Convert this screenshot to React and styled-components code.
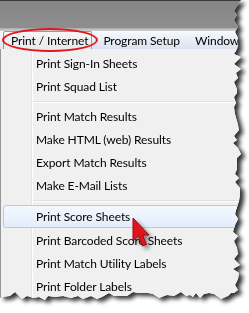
import React from 'react';
import styled, { createGlobalStyle } from 'styled-components';

const GlobalStyle = createGlobalStyle`
  html, body {
    margin: 0;
    padding: 0;
    background: #ffffff;
  }
  body {
    font-family: Lato, "Noto Sans", sans-serif;
  }
`;

// torn-paper outline, seeded so it draws the same every time
const makeTear = () => {
   let seed = 7;
   const rnd = () => {
      seed = (seed * 9301 + 49297) % 233280;
      return seed / 233280;
   };
   const pts = ['0px 0px', '241px 0px'];
   for (let y = 6; y < 288; y += 3 + Math.round(rnd() * 4)) {
      pts.push(`${233 + Math.round(rnd() * 8)}px ${y}px`);
   }
   pts.push('238px 290px');
   for (let x = 234; x > 0; x -= 3 + Math.round(rnd() * 5)) {
      pts.push(`${x}px ${292 + Math.round(rnd() * 8)}px`);
   }
   pts.push('0px 298px');
   return `polygon(${pts.join(', ')})`;
};

const TEAR = makeTear();

const MENU = [
   { label: 'Print Sign-In Sheets' },
   { label: 'Print Squad List' },
   { sep: true },
   { label: 'Print Match Results' },
   { label: 'Make HTML (web) Results' },
   { label: 'Export Match Results' },
   { label: 'Make E-Mail Lists' },
   { sep: true },
   { label: 'Print Score Sheets', active: true },
   { label: 'Print Barcoded Score Sheets' },
   { label: 'Print Match Utility Labels' },
   { label: 'Print Folder Labels' },
];

const App = () => {
   return (
      <Stage>
         <GlobalStyle />
         <Shadow>
            <Paper $clip={TEAR}>
               <TitleStrip />
               <TitleEdge />
               <MenuBar>
                  <BarItem $open>Print / Internet</BarItem>
                  <BarItem>Program Setup</BarItem>
                  <BarItem>Window</BarItem>
               </MenuBar>
               <Dropdown>
                  {MENU.map((item, i) =>
                     item.sep ? (
                        <Separator key={i} />
                     ) : (
                        <MenuItem key={i} $active={item.active}>
                           {item.label}
                        </MenuItem>
                     )
                  )}
               </Dropdown>
            </Paper>
         </Shadow>
         <Ring />
         <Pointer viewBox="0 0 18 31" width="18" height="31">
            <path
               d="M1 1 L1 24 L6.5 19 L10.5 29 L14.5 27.5 L10.5 18 L17 18 Z"
               fill="#e3141b"
               stroke="#9c0a0e"
               strokeWidth="1"
               strokeLinejoin="round"
            />
         </Pointer>
      </Stage>
   );
};

export default App;

const Stage = styled.div`
   position: relative;
   width: 249px;
   height: 313px;
   overflow: hidden;
   background: #ffffff;
`;

const Shadow = styled.div`
   width: 243px;
   filter: drop-shadow(4px 3px 2px rgba(0, 0, 0, 0.8));
`;

const Paper = styled.div`
   width: 243px;
   height: 303px;
   background: #f0f0f0;
   clip-path: ${(p) => p.$clip};
   display: flex;
   flex-direction: column;
`;

const TitleStrip = styled.div`
   height: 27px;
   border-top: 1px solid #3a3a3a;
   background: linear-gradient(to bottom, #868686, #8e8e8e);
`;

const TitleEdge = styled.div`
   height: 3px;
   background: linear-gradient(to bottom, #a9a9a9, #cfd3d8);
`;

const MenuBar = styled.div`
   height: 18px;
   display: flex;
   align-items: stretch;
   padding-left: 3px;
   gap: 3px;
   background: linear-gradient(to bottom, #f7f9fd 0%, #e9eef7 50%, #dbe3f0 100%);
`;

const BarItem = styled.div`
   display: flex;
   align-items: center;
   padding: 0 3px 0 7px;
   font-size: 12px;
   letter-spacing: -0.1px;
   color: #000;
   white-space: nowrap;
   border: 1px solid ${(p) => (p.$open ? '#9a9a9a' : 'transparent')};
   border-bottom: none;
   border-radius: 2px 2px 0 0;
   background: ${(p) =>
      p.$open ? 'linear-gradient(to bottom, #f6f6f6, #e7e9ec)' : 'transparent'};
`;

const Dropdown = styled.div`
   flex: 1;
   padding-top: 3px;
   border-left: 1px solid #979797;
   background-color: #f0f0f0;
   background-image: linear-gradient(
      to right,
      transparent 0 30px,
      #e2e3e3 30px 31px,
      #ffffff 31px 32px,
      transparent 32px
   );
`;

const MenuItem = styled.div`
   height: ${(p) => (p.$active ? '21px' : '23px')};
   margin: ${(p) => (p.$active ? '1px 0 1px 2px' : '0')};
   padding-left: ${(p) => (p.$active ? '32px' : '35px')};
   display: flex;
   align-items: center;
   font-size: 12px;
   letter-spacing: -0.1px;
   color: #000;
   white-space: nowrap;
   border: ${(p) => (p.$active ? '1px solid #a9cdf4' : 'none')};
   border-radius: 3px;
   background: ${(p) =>
      p.$active ? 'linear-gradient(to bottom, #f3f8fe, #e3edfa)' : 'transparent'};
`;

const Separator = styled.div`
   height: 7px;
   margin-left: 32px;
   display: flex;
   flex-direction: column;
   justify-content: center;

   &::before {
      content: '';
      height: 1px;
      background: #e0e0e0;
   }
   &::after {
      content: '';
      height: 1px;
      background: #ffffff;
   }
`;

const Ring = styled.div`
   position: absolute;
   left: 2px;
   top: 28px;
   width: 92px;
   height: 20px;
   border: 2px solid #e3141b;
   border-radius: 50%;
`;

const Pointer = styled.svg`
   position: absolute;
   left: 132px;
   top: 217px;
   filter: drop-shadow(3px 3px 2px rgba(0, 0, 0, 0.45));
`;
